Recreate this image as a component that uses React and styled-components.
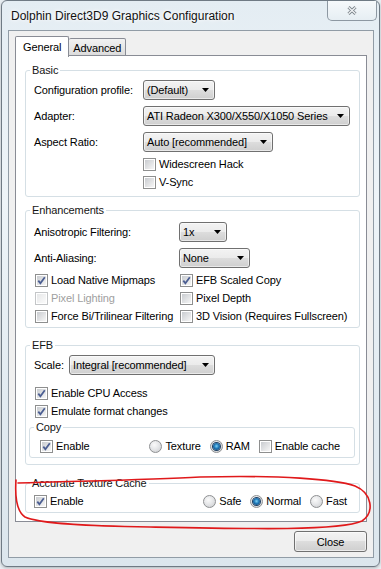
import React from 'react'
import styled, { createGlobalStyle } from 'styled-components'

const GlobalStyle = createGlobalStyle`
  html, body {
    margin: 0;
    padding: 0;
    background: #e8eef2;
  }
  body {
    font-family: "Liberation Sans", Arial, sans-serif;
    font-size: 11px;
    letter-spacing: -0.12px;
    color: #000;
  }
`

const Screen = styled.div`
  position: relative;
  width: 381px;
  height: 569px;
  overflow: hidden;
`

const Frame = styled.div`
  box-sizing: border-box;
  width: 379px;
  margin-left: 1px;
  padding-bottom: 8px;
  border: 1px solid #6f7a84;
  border-radius: 6px;
  background: linear-gradient(180deg, #e4edf3 0%, #eef4f8 35%, #e2ebf1 70%, #dce6ed 100%);
  box-shadow: 0 1px 3px rgba(0, 0, 0, 0.25);
  display: flex;
  flex-direction: column;
`

const TitleBar = styled.div`
  height: 29px;
  display: flex;
  align-items: center;
`

const Title = styled.div`
  padding-left: 9px;
  font-size: 12px;
  letter-spacing: 0;
  color: #111;
  text-shadow: 0 0 6px #fff, 0 0 3px #fff;
`

const CaptionClose = styled.div`
  align-self: flex-start;
  margin-left: auto;
  margin-right: 2px;
  width: 50px;
  height: 20px;
  box-sizing: border-box;
  border: 1px solid #8d98a2;
  border-top: none;
  border-radius: 0 0 5px 5px;
  background: linear-gradient(180deg, #f6f9fb 0%, #e6eef3 100%);
  display: flex;
  align-items: center;
  justify-content: center;
`

const Client = styled.div`
  box-sizing: border-box;
  margin: 0 5px 0 6px;
  padding: 5px 6px 5px 6px;
  border: 1px solid #919ca6;
  background: #f0f0f0;
  display: flex;
  flex-direction: column;
`

const TabStrip = styled.div`
  height: 20px;
  display: flex;
  align-items: flex-end;
`

const Tab = styled.div`
  box-sizing: border-box;
  position: relative;
  z-index: ${p => (p.$active ? 1 : 0)};
  height: ${p => (p.$active ? 21 : 18)}px;
  margin-bottom: ${p => (p.$active ? -1 : 0)}px;
  padding: ${p => (p.$active ? '3px 7px 0' : '2px 4px 0')};
  border: 1px solid #898c95;
  border-bottom: ${p => (p.$active ? 'none' : '1px solid #898c95')};
  border-left: ${p => (p.$active ? '1px solid #898c95' : 'none')};
  border-radius: 2px 2px 0 0;
  background: ${p => (p.$active ? '#fff' : 'linear-gradient(180deg, #f2f2f2 0%, #e8e8e8 50%, #dcdcdc 100%)')};
  line-height: 14px;
`

const TabPage = styled.div`
  margin-top: -1px;
  padding: 7px 6px 8px 9px;
  border: 1px solid #898c95;
  background: #fff;
  display: flex;
  flex-direction: column;
`

const Group = styled.fieldset`
  margin: ${p => p.$top || 0}px ${p => p.$mr || 0}px 0 ${p => p.$ml || 0}px;
  padding: ${p => p.$pt || 0}px 6px ${p => p.$pb || 0}px 8px;
  border: 1px solid #d5dfe5;
  border-radius: 3px;
  min-width: 0;
`

const Legend = styled.legend`
  margin-left: -4px;
  padding: 0 2px;
  line-height: 14px;
  color: #151515;
`

const FieldRow = styled.div`
  height: 26px;
  display: flex;
  align-items: center;
`

const FieldLabel = styled.div`
  width: ${p => p.$w}px;
  flex: none;
`

const Combo = styled.div`
  box-sizing: border-box;
  width: ${p => p.$w}px;
  height: 20px;
  padding-left: 3px;
  border: 1px solid #707070;
  border-radius: 3px;
  background: linear-gradient(180deg, #f3f3f3 0%, #ebebeb 50%, #dddddd 50%, #cfcfcf 100%);
  box-shadow: inset 0 0 0 1px rgba(255, 255, 255, 0.55);
  display: flex;
  align-items: center;
  white-space: nowrap;
  svg {
    margin-left: auto;
    margin-right: 5px;
    flex: none;
  }
`

const CheckRow = styled.div`
  height: 18px;
  padding-left: ${p => p.$indent || 0}px;
  display: flex;
  align-items: center;
  margin-top: ${p => p.$top || 0}px;
`

const CheckGrid = styled.div`
  padding-left: 1px;
  display: grid;
  grid-template-columns: 145px 1fr;
  grid-auto-rows: 18px;
  align-items: center;
`

const OptionRow = styled.div`
  height: 18px;
  padding: 0 ${p => p.$pr}px 0 ${p => p.$pl}px;
  display: flex;
  align-items: center;
  gap: 9px;
  > :first-child {
    margin-right: auto;
  }
`

const Option = styled.label`
  display: inline-flex;
  align-items: center;
  gap: 3px;
  white-space: nowrap;
  color: ${p => (p.$disabled ? '#a0a0a0' : '#000')};
`

const Box = styled.span`
  box-sizing: border-box;
  width: 13px;
  height: 13px;
  padding: 1px;
  flex: none;
  border: 1px solid ${p => (p.$disabled ? '#c4c6c8' : '#8e8f8f')};
  background: ${p =>
    p.$disabled
      ? 'linear-gradient(135deg, #e6e7e8, #fbfbfb) content-box, #fff'
      : 'linear-gradient(135deg, #c9ccd0, #f6f6f6) content-box, #fff'};
  display: flex;
  align-items: center;
  justify-content: center;
`

const Round = styled.span`
  box-sizing: border-box;
  width: 13px;
  height: 13px;
  flex: none;
  border: 1px solid #8e9092;
  border-radius: 50%;
  background: radial-gradient(circle at 40% 35%, #fafafa 0%, #e6e7e9 45%, #c8cacd 100%);
  display: flex;
  align-items: center;
  justify-content: center;
`

const Dot = styled.span`
  width: 7px;
  height: 7px;
  border-radius: 50%;
  background: radial-gradient(circle at 50% 45%, #7fd3f5 0%, #1f78b8 45%, #0b355f 100%);
  box-shadow: 0 0 0 1px #1d3f63;
`

const ButtonRow = styled.div`
  margin-top: 9px;
  display: flex;
  justify-content: flex-end;
`

const PushButton = styled.div`
  box-sizing: border-box;
  width: 73px;
  height: 21px;
  border: 1px solid #707070;
  border-radius: 3px;
  background: linear-gradient(180deg, #f3f3f3 0%, #ebebeb 50%, #dddddd 50%, #cfcfcf 100%);
  box-shadow: inset 0 0 0 1px rgba(255, 255, 255, 0.6);
  display: flex;
  align-items: center;
  justify-content: center;
`

const Annotation = styled.svg`
  position: absolute;
  left: 0;
  top: 0;
  pointer-events: none;
`

const Arrow = () => (
  <svg width="7" height="4" viewBox="0 0 7 4">
    <polygon points="0,0 7,0 3.5,4" fill="#000" />
  </svg>
)

const Check = ({ checked, disabled, children }) => (
  <Option $disabled={disabled}>
    <Box $disabled={disabled}>
      {checked && (
        <svg width="9" height="9" viewBox="0 0 9 9">
          <path d="M1.3 4.6 L3.4 7.2 L7.8 1.2" fill="none" stroke="#4b5e92" strokeWidth="1.8" />
        </svg>
      )}
    </Box>
    {children}
  </Option>
)

const Radio = ({ checked, children }) => (
  <Option>
    <Round>{checked && <Dot />}</Round>
    {children}
  </Option>
)

const App = () => {
  return (
    <Screen>
      <GlobalStyle />
      <Frame>
        <TitleBar>
          <Title>Dolphin Direct3D9 Graphics Configuration</Title>
          <CaptionClose>
            <svg width="10" height="9" viewBox="0 0 10 9">
              <path d="M1.5 1.2 L8.5 7.8 M8.5 1.2 L1.5 7.8" stroke="#7b838a" strokeWidth="3" />
              <path d="M1.5 1.2 L8.5 7.8 M8.5 1.2 L1.5 7.8" stroke="#f4f6f8" strokeWidth="1.2" />
            </svg>
          </CaptionClose>
        </TitleBar>
        <Client>
          <TabStrip>
            <Tab $active>General</Tab>
            <Tab>Advanced</Tab>
          </TabStrip>
          <TabPage>
            <Group $pb={5}>
              <Legend>Basic</Legend>
              <FieldRow>
                <FieldLabel $w={109}>Configuration profile:</FieldLabel>
                <Combo $w={72}>(Default)<Arrow /></Combo>
              </FieldRow>
              <FieldRow>
                <FieldLabel $w={109}>Adapter:</FieldLabel>
                <Combo $w={207}>ATI Radeon X300/X550/X1050 Series<Arrow /></Combo>
              </FieldRow>
              <FieldRow>
                <FieldLabel $w={109}>Aspect Ratio:</FieldLabel>
                <Combo $w={130}>Auto [recommended]<Arrow /></Combo>
              </FieldRow>
              <CheckRow $indent={109}>
                <Check>Widescreen Hack</Check>
              </CheckRow>
              <CheckRow $indent={109}>
                <Check>V-Sync</Check>
              </CheckRow>
            </Group>

            <Group $top={6} $pt={2} $pb={2}>
              <Legend>Enhancements</Legend>
              <FieldRow>
                <FieldLabel $w={145}>Anisotropic Filtering:</FieldLabel>
                <Combo $w={48}>1x<Arrow /></Combo>
              </FieldRow>
              <FieldRow>
                <FieldLabel $w={145}>Anti-Aliasing:</FieldLabel>
                <Combo $w={71}>None<Arrow /></Combo>
              </FieldRow>
              <CheckGrid>
                <Check checked>Load Native Mipmaps</Check>
                <Check checked>EFB Scaled Copy</Check>
                <Check disabled>Pixel Lighting</Check>
                <Check>Pixel Depth</Check>
                <Check>Force Bi/Trilinear Filtering</Check>
                <Check>3D Vision (Requires Fullscreen)</Check>
              </CheckGrid>
            </Group>

            <Group $top={10} $pb={6}>
              <Legend>EFB</Legend>
              <FieldRow>
                <FieldLabel $w={35}>Scale:</FieldLabel>
                <Combo $w={146}>Integral [recommended]<Arrow /></Combo>
              </FieldRow>
              <CheckRow $indent={1} $top={6}>
                <Check checked>Enable CPU Access</Check>
              </CheckRow>
              <CheckRow $indent={1}>
                <Check checked>Emulate format changes</Check>
              </CheckRow>
              <Group $ml={-5} $mr={-2} $pt={3} $pb={2}>
                <Legend>Copy</Legend>
                <OptionRow $pl={2} $pr={8}>
                  <Check checked>Enable</Check>
                  <Radio>Texture</Radio>
                  <Radio checked>RAM</Radio>
                  <Check>Enable cache</Check>
                </OptionRow>
              </Group>
            </Group>

            <Group $top={11} $pt={2} $pb={2}>
              <Legend>Accurate Texture Cache</Legend>
              <OptionRow $pl={0} $pr={6}>
                <Check checked>Enable</Check>
                <Radio>Safe</Radio>
                <Radio checked>Normal</Radio>
                <Radio>Fast</Radio>
              </OptionRow>
            </Group>
          </TabPage>
          <ButtonRow>
            <PushButton>Close</PushButton>
          </ButtonRow>
        </Client>
      </Frame>
      <Annotation width="381" height="569" viewBox="0 0 381 569">
        <path
          d="M18 483 C80 481, 150 480, 200 477 C280 475, 335 479, 355 486 C372 493, 375 512, 362 521 C340 531, 250 529, 150 527 C90 526, 40 524, 25 517 C16 511, 15 495, 16 480"
          fill="none"
          stroke="#e0191b"
          strokeWidth="1.6"
          strokeLinecap="round"
        />
      </Annotation>
    </Screen>
  )
}

export default App
